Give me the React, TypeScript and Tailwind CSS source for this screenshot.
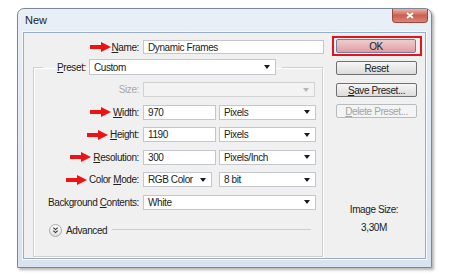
import type { ReactNode } from "react";

const font = { fontFamily: '"Liberation Sans", Arial, sans-serif' };

const Arrow = () => (
  <svg width="21" height="10" viewBox="0 0 21 10" className="shrink-0">
    <path d="M0 3h11V0l10 5-10 5V7H0z" fill="#ee1212" />
  </svg>
);

const Caret = ({ disabled = false }: { disabled?: boolean }) => (
  <svg width="6" height="4" viewBox="0 0 6 4" className="shrink-0">
    <path d="M0 0h6L3 4z" fill={disabled ? "#b5b5b5" : "#1a1a1a"} />
  </svg>
);

function Label({ children, arrow = false, disabled = false }: { children: ReactNode; arrow?: boolean; disabled?: boolean }) {
  return (
    <div className={`flex w-[105px] items-center justify-end gap-[2px] ${disabled ? "text-[#a8a8a8]" : "text-[#222]"}`}>
      {arrow && <Arrow />}
      <span>{children}</span>
    </div>
  );
}

function Input({ value, w }: { value: string; w: string }) {
  return (
    <div className={`${w} flex h-[15px] items-center border border-[#c3c6cc] bg-white pl-[4px] text-[#222]`}>
      {value}
    </div>
  );
}

function Select({ value, w, disabled = false }: { value?: string; w: string; disabled?: boolean }) {
  return (
    <div
      className={`${w} flex h-[15px] items-center justify-between border pl-[4px] pr-[5px] ${
        disabled ? "border-[#d2d2d2] bg-[#f3f3f3]" : "border-[#c3c6cc] bg-white text-[#222]"
      }`}
    >
      <span>{value}</span>
      <Caret disabled={disabled} />
    </div>
  );
}

function Button({ children, disabled = false }: { children: ReactNode; disabled?: boolean }) {
  return (
    <div
      className={`ml-[4px] flex h-[14px] w-[81px] items-center justify-center rounded-[2px] border ${
        disabled
          ? "border-[#b8bcc0] bg-[#f4f4f4] text-[#a3a3a3]"
          : "border-[#707070] bg-gradient-to-b from-[#f6f6f6] to-[#dcdcdc] text-[#222]"
      }`}
    >
      {children}
    </div>
  );
}

export default function App() {
  return (
    <div className="h-[276px] w-[450px] overflow-hidden bg-white pl-[17px] pt-[8px] text-[10px] tracking-[-0.4px]" style={font}>
      <div className="flex h-[260px] w-[415px] flex-col rounded-t-[7px] border border-[#7d8896] bg-gradient-to-b from-[#e9eff6] to-[#d8e3ef] shadow-[2px_2px_3px_rgba(0,0,0,0.3)]">
        <div className="flex h-[23px] items-start justify-between">
          <span className="pl-[7px] pt-[5px] text-[11px] leading-[12px] tracking-normal text-[#222]">New</span>
          <div className="mr-[3px] flex h-[14px] w-[36px] items-center justify-center rounded-b-[4px] border border-t-0 border-[#9a4a40] bg-gradient-to-b from-[#e9b3a8] via-[#cc5f50] to-[#d98676]">
            <svg width="8" height="7" viewBox="0 0 8 7">
              <path d="M1 1l6 5M7 1L1 6" stroke="#fff" strokeWidth="1.8" />
            </svg>
          </div>
        </div>

        <div className="mx-[5px] flex h-[227px] border border-[#98adc6] bg-[#f0f0f0] shadow-[0_0_0_1px_#f7fafd]">
          <div className="w-[300px] pt-[7px]">
            <div className="flex h-[14px] items-center gap-[4px]">
              <div className="flex w-[115px] items-center justify-end gap-[1px] text-[#222]">
                <Arrow />
                <span>
                  <u className="underline-offset-1">N</u>ame:
                </span>
              </div>
              <div className="flex h-[14px] w-[181px] items-center border border-[#c3c6cc] bg-white pl-[4px] text-[#222]">
                Dynamic Frames
              </div>
            </div>

            <fieldset className="ml-[9px] mt-[5px] w-[290px] border border-[#cfcfcf] pb-[19px] pt-[7px] shadow-[inset_1px_1px_0_#fff,1px_1px_0_#fff]">
              <legend className="ml-[9px] flex items-center gap-[3px] pl-[14px] pr-[6px]">
                <span className="text-[#222]">
                  <u className="underline-offset-1">P</u>reset:
                </span>
                <div className="flex h-[16px] w-[187px] items-center justify-between border border-[#c3c6cc] bg-white pl-[4px] pr-[5px] text-[#222]">
                  <span>Custom</span>
                  <Caret />
                </div>
              </legend>

              <div className="flex flex-col gap-[7.6px]">
                <div className="flex items-center gap-[4px]">
                  <Label disabled>Size:</Label>
                  <Select w="w-[172px]" disabled />
                </div>
                <div className="flex items-center gap-[4px]">
                  <Label arrow>
                    <u className="underline-offset-1">W</u>idth:
                  </Label>
                  <Input value="970" w="w-[73px]" />
                  <div className="ml-[-1px]">
                    <Select value="Pixels" w="w-[97px]" />
                  </div>
                </div>
                <div className="flex items-center gap-[4px]">
                  <Label arrow>
                    <u className="underline-offset-1">H</u>eight:
                  </Label>
                  <Input value="1190" w="w-[73px]" />
                  <div className="ml-[-1px]">
                    <Select value="Pixels" w="w-[97px]" />
                  </div>
                </div>
                <div className="flex items-center gap-[4px]">
                  <Label arrow>
                    <u className="underline-offset-1">R</u>esolution:
                  </Label>
                  <Input value="300" w="w-[73px]" />
                  <div className="ml-[-1px]">
                    <Select value="Pixels/Inch" w="w-[97px]" />
                  </div>
                </div>
                <div className="flex items-center gap-[4px]">
                  <Label arrow>
                    Color <u className="underline-offset-1">M</u>ode:
                  </Label>
                  <Select value="RGB Color" w="w-[69px]" />
                  <div className="ml-[3px]">
                    <Select value="8 bit" w="w-[97px]" />
                  </div>
                </div>
                <div className="flex items-center gap-[4px]">
                  <Label>
                    Background <u className="underline-offset-1">C</u>ontents:
                  </Label>
                  <Select value="White" w="w-[173px]" />
                </div>
              </div>

              <div className="mt-[14px] flex h-[13px] items-center pl-[15px] pr-[11px]">
                <svg width="13" height="13" viewBox="0 0 13 13" className="shrink-0">
                  <defs>
                    <linearGradient id="adv" x1="0" y1="0" x2="0" y2="1">
                      <stop offset="0" stopColor="#ffffff" />
                      <stop offset="1" stopColor="#dedede" />
                    </linearGradient>
                  </defs>
                  <circle cx="6.5" cy="6.5" r="6" fill="url(#adv)" stroke="#a9a9a9" />
                  <path d="M4.3 3.6l2.2 2 2.2-2M4.3 6.6l2.2 2 2.2-2" fill="none" stroke="#333" strokeWidth="1.1" />
                </svg>
                <span className="ml-[4px] text-[#222]">Advanced</span>
                <div className="ml-[5px] h-[2px] flex-1 border-t border-[#cdcdcd] border-b-white" />
              </div>
            </fieldset>
          </div>

          <div className="ml-[8px] w-[90px] pt-[3px]">
            <div className="border-2 border-[#e3141b] px-[2px] py-[1px]">
              <div className="flex h-[14px] w-[80px] items-center justify-center rounded-[2px] border border-[#6f7fa3] bg-gradient-to-b from-[#f1cccc] to-[#df9ea3] text-[#222]">
                OK
              </div>
            </div>
            <div className="mt-[5px]">
              <Button>Reset</Button>
            </div>
            <div className="mt-[8px]">
              <Button>
                <u className="underline-offset-1">S</u>ave Preset...
              </Button>
            </div>
            <div className="mt-[7px]">
              <Button disabled>
                <u className="underline-offset-1">D</u>elete Preset...
              </Button>
            </div>
            <div className="mt-[86px] pr-[6px] text-center leading-[12px] text-[#222]">
              <div>Image Size:</div>
              <div className="mt-[6px]">3,30M</div>
            </div>
          </div>
        </div>
      </div>
    </div>
  );
}
